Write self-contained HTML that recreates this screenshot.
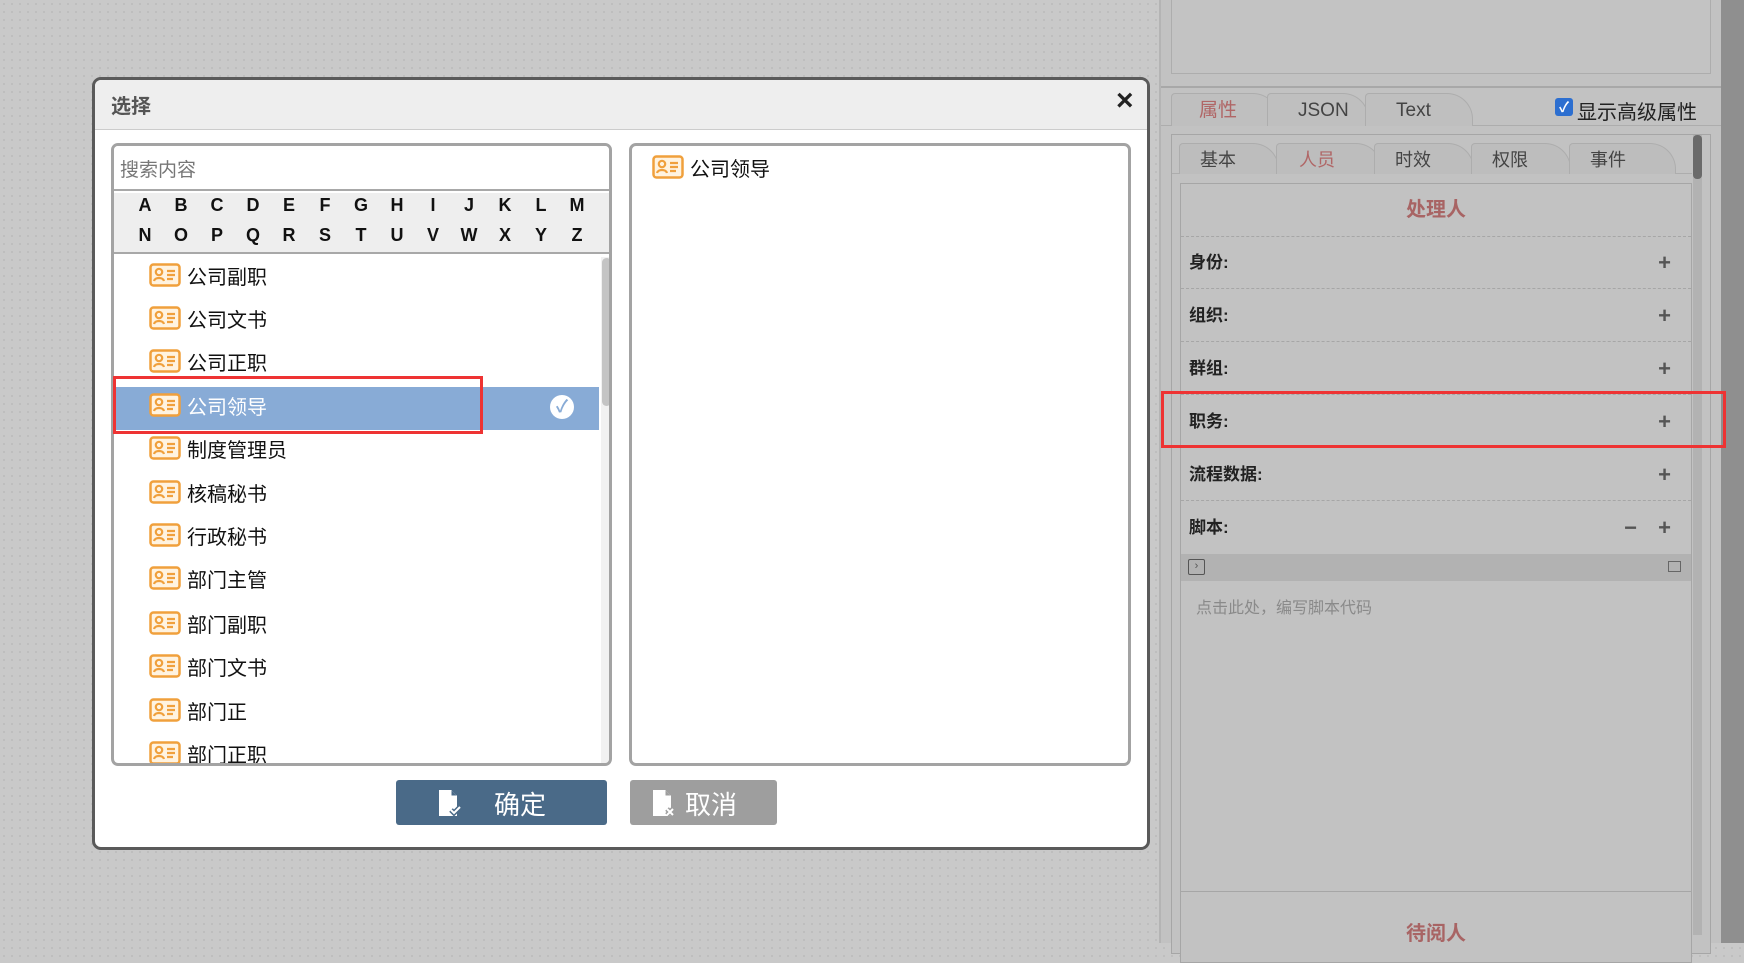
<!DOCTYPE html>
<html><head><meta charset="utf-8"><style>
*{box-sizing:border-box;margin:0;padding:0}
body{width:1744px;height:943px;position:relative;overflow:hidden;font-family:"Liberation Sans","Noto Sans CJK SC",sans-serif;background-color:#c9c9c9;background-image:radial-gradient(#bdbdbd 1px,transparent 1.2px);background-size:8px 8px}
.abs{position:absolute}
.dlg{left:92px;top:77px;width:1058px;height:773px;background:#fff;border:3px solid #5a5a5a;border-radius:9px;overflow:hidden}
.hdr{left:0;top:0;width:100%;height:50px;background:#eee;border-bottom:1px solid #ccc}
.panel{border:3px solid #a3a3a3;border-radius:7px;background:#fff;overflow:hidden}
.letters span{position:absolute;font-weight:bold;font-size:18px;color:#111;transform:translateX(-50%)}
.item{position:absolute;left:35px;height:30px;font-size:20px;color:#111;display:flex;align-items:center}
.item svg{margin-right:6px}
.rp{left:1159px;top:0;width:562px;height:943px;background:#c2c2c2;border-left:2px solid #b4b4b4}
.tab{position:absolute;height:33px;border:1px solid #adadad;border-bottom:none;border-radius:4px 26px 0 0;background:#bfbfbf;font-size:19px;color:#444;padding-left:30px;line-height:33px}
.stab{position:absolute;height:31px;border:1px solid #adadad;border-bottom:none;border-radius:4px 26px 0 0;background:#bdbdbd;font-size:18px;color:#444;padding-left:20px;line-height:33px}
.row{position:absolute;left:0;width:100%;height:52px;border-bottom:1px dashed #a6a6a6;font-weight:bold;font-size:17px;color:#222;padding-left:8px;line-height:52px}
.row .pl{position:absolute;right:20px;top:0;font-size:22px;color:#555;font-weight:bold}
</style></head><body>
<svg width="0" height="0" style="position:absolute"><defs>
<symbol id="ic" viewBox="0 0 32 24"><rect x="1.5" y="1.5" width="29" height="21" rx="3" fill="#fff3e0" stroke="#f0a03c" stroke-width="2.5"/><circle cx="10" cy="9" r="3.2" fill="none" stroke="#f0a03c" stroke-width="2.2"/><path d="M5 18c1-4 9-4 10 0" fill="none" stroke="#f0a03c" stroke-width="2.2"/><path d="M18 8h8M18 12h8M18 16h6" stroke="#f0a03c" stroke-width="2.2"/></symbol>
</defs></svg>

<div class="abs dlg">
 <div class="abs hdr"></div>
 <div class="abs" style="left:16px;top:10px;font-size:20px;font-weight:bold;color:#555">选择</div>
 <div class="abs" style="left:1021px;top:4px;font-size:30px;font-weight:bold;color:#222">×</div>

 <div class="abs panel" style="left:16px;top:63px;width:501px;height:623px">
  <div class="abs" style="left:0;top:0;width:100%;height:45px;background:#fff;border-bottom:2px solid #a8a8a8"></div>
  <div class="abs" style="left:6px;top:9px;font-size:19px;color:#777">搜索内容</div>
  <div class="abs letters" style="left:0;top:47px;width:100%;height:61px;background:#eee;border-bottom:2px solid #a8a8a8">
   <span style="left:31px;top:2px">A</span><span style="left:67px;top:2px">B</span><span style="left:103px;top:2px">C</span><span style="left:139px;top:2px">D</span><span style="left:175px;top:2px">E</span><span style="left:211px;top:2px">F</span><span style="left:247px;top:2px">G</span><span style="left:283px;top:2px">H</span><span style="left:319px;top:2px">I</span><span style="left:355px;top:2px">J</span><span style="left:391px;top:2px">K</span><span style="left:427px;top:2px">L</span><span style="left:463px;top:2px">M</span>
   <span style="left:31px;top:32px">N</span><span style="left:67px;top:32px">O</span><span style="left:103px;top:32px">P</span><span style="left:139px;top:32px">Q</span><span style="left:175px;top:32px">R</span><span style="left:211px;top:32px">S</span><span style="left:247px;top:32px">T</span><span style="left:283px;top:32px">U</span><span style="left:319px;top:32px">V</span><span style="left:355px;top:32px">W</span><span style="left:391px;top:32px">X</span><span style="left:427px;top:32px">Y</span><span style="left:463px;top:32px">Z</span>
  </div>
  <div class="abs" style="left:487px;top:111px;width:11px;height:512px;background:#f1f1f1"></div>
  <div class="abs" style="left:488px;top:112px;width:9px;height:148px;background:#c4c4c4;border-radius:5px"></div>
  <div class="abs" style="left:1px;top:241px;width:484px;height:43px;background:#88abd6"></div>
  <div class="abs" style="left:436px;top:249px;width:24px;height:24px;border-radius:50%;background:#fff;color:#88abd6;font-size:17px;font-weight:bold;text-align:center;line-height:24px">✓</div>
  <div class="item" style="top:114px"><svg width="32" height="24"><use href="#ic"/></svg>公司副职</div>
  <div class="item" style="top:157px"><svg width="32" height="24"><use href="#ic"/></svg>公司文书</div>
  <div class="item" style="top:200px"><svg width="32" height="24"><use href="#ic"/></svg>公司正职</div>
  <div class="item" style="top:244px;color:#fff"><svg width="32" height="24"><use href="#ic"/></svg>公司领导</div>
  <div class="item" style="top:287px"><svg width="32" height="24"><use href="#ic"/></svg>制度管理员</div>
  <div class="item" style="top:331px"><svg width="32" height="24"><use href="#ic"/></svg>核稿秘书</div>
  <div class="item" style="top:374px"><svg width="32" height="24"><use href="#ic"/></svg>行政秘书</div>
  <div class="item" style="top:417px"><svg width="32" height="24"><use href="#ic"/></svg>部门主管</div>
  <div class="item" style="top:462px"><svg width="32" height="24"><use href="#ic"/></svg>部门副职</div>
  <div class="item" style="top:505px"><svg width="32" height="24"><use href="#ic"/></svg>部门文书</div>
  <div class="item" style="top:549px"><svg width="32" height="24"><use href="#ic"/></svg>部门正</div>
  <div class="item" style="top:592px"><svg width="32" height="24"><use href="#ic"/></svg>部门正职</div>
 </div>
 <div class="abs" style="left:18px;top:296px;width:370px;height:58px;border:3px solid #ee3333"></div>

 <div class="abs panel" style="left:534px;top:63px;width:502px;height:623px">
  <div class="item" style="left:20px;top:6px"><svg width="32" height="24"><use href="#ic"/></svg>公司领导</div>
 </div>

 <div class="abs" style="left:301px;top:700px;width:211px;height:45px;background:#4a6a88;border-radius:3px;color:#fff;font-size:26px">
  <svg class="abs" style="left:40px;top:8px" width="30" height="30" viewBox="0 0 30 30"><path d="M3 2h12l6 6v20H3z" fill="#fff"/><path d="M15 2v6h6" fill="#4a6a88" stroke="#fff"/><path d="M15 22l3 3 6-6" stroke="#4a6a88" stroke-width="5" fill="none"/><path d="M15 22l3 3 6-6" stroke="#fff" stroke-width="2" fill="none"/></svg>
  <span class="abs" style="left:98px;top:5px">确定</span></div>
 <div class="abs" style="left:535px;top:700px;width:147px;height:45px;background:#9e9e9e;border-radius:3px;color:#fff;font-size:26px">
  <svg class="abs" style="left:20px;top:8px" width="30" height="30" viewBox="0 0 30 30"><path d="M3 2h12l6 6v20H3z" fill="#fff"/><path d="M15 2v6h6" fill="#9e9e9e" stroke="#fff"/><path d="M17 21l6 6M23 21l-6 6" stroke="#9e9e9e" stroke-width="5"/><path d="M17 21l6 6M23 21l-6 6" stroke="#fff" stroke-width="2"/></svg>
  <span class="abs" style="left:55px;top:5px">取消</span></div>
</div>

<div class="abs rp">
 <div class="abs" style="left:10px;top:-2px;width:540px;height:76px;border:1px solid #adadad;background:#c3c3c3"></div>
 <div class="abs" style="left:0;top:86px;width:100%;height:2px;background:#a8a8a8"></div>
 <div class="abs" style="left:0;top:125px;width:100%;height:1px;background:#adadad"></div>
 <div class="tab" style="left:10px;top:93px;width:108px;color:#b06666;padding-left:27px">属性</div>
 <div class="tab" style="left:106px;top:93px;width:102px">JSON</div>
 <div class="tab" style="left:204px;top:93px;width:108px">Text</div>
 <div class="abs" style="left:394px;top:98px;width:18px;height:18px;background:#2d6fd0;border-radius:3px;color:#fff;font-size:14px;text-align:center;line-height:18px;font-weight:bold">✓</div>
 <div class="abs" style="left:416px;top:96px;font-size:20px;color:#222">显示高级属性</div>

 <div class="abs" style="left:10px;top:134px;width:540px;height:820px;border:1px solid #a6a6a6;background:#c2c2c2"></div>
 <div class="abs" style="left:532px;top:135px;width:9px;height:800px;background:#b2b2b2"></div>
 <div class="abs" style="left:532px;top:135px;width:9px;height:44px;background:#6a6a6a;border-radius:4px"></div>
 <div class="abs" style="left:11px;top:173px;width:520px;height:1px;background:#adadad"></div>
 <div class="stab" style="left:18px;top:143px;width:100px">基本</div>
 <div class="stab" style="left:115px;top:143px;width:106px;color:#b06666;padding-left:22px">人员</div>
 <div class="stab" style="left:213px;top:143px;width:100px">时效</div>
 <div class="stab" style="left:310px;top:143px;width:100px">权限</div>
 <div class="stab" style="left:408px;top:143px;width:107px">事件</div>

 <div class="abs" style="left:19px;top:183px;width:512px;height:780px;border:1px solid #a6a6a6;background:#c2c2c2">
  <div class="abs" style="left:0;top:0;width:100%;height:53px;border-bottom:1px dashed #a6a6a6;text-align:center;line-height:53px;font-size:20px;font-weight:bold;color:#a86464">处理人</div>
  <div class="row" style="top:53px">身份:<span class="pl">+</span></div>
  <div class="row" style="top:106px">组织:<span class="pl">+</span></div>
  <div class="row" style="top:159px">群组:<span class="pl">+</span></div>
  <div class="row" style="top:212px">职务:<span class="pl">+</span></div>
  <div class="row" style="top:265px">流程数据:<span class="pl">+</span></div>
  <div class="row" style="top:318px;border:none">脚本:<span class="pl" style="right:54px">−</span><span class="pl">+</span></div>
  <div class="abs" style="left:0;top:370px;width:100%;height:27px;background:#b2b2b2"></div>
  <div class="abs" style="left:7px;top:375px;width:17px;height:16px;border:1.5px solid #555;border-radius:2px;font-size:11px;line-height:12px;text-align:center;color:#555">›</div>
  <div class="abs" style="left:487px;top:377px;width:13px;height:11px;border:1.5px solid #666"></div>
  <div class="abs" style="left:15px;top:410px;font-size:16px;color:#8a8a8a">点击此处，编写脚本代码</div>
  <div class="abs" style="left:0;top:707px;width:100%;height:1px;background:#a6a6a6"></div>
  <div class="abs" style="left:0;top:733px;width:100%;text-align:center;font-size:20px;font-weight:bold;color:#a86464">待阅人</div>
 </div>
</div>
<div class="abs" style="left:1721px;top:0;width:23px;height:943px;background:#8f8f8f"></div>
<div class="abs" style="left:1161px;top:391px;width:565px;height:57px;border:3px solid #ee3333"></div>
</body></html>
